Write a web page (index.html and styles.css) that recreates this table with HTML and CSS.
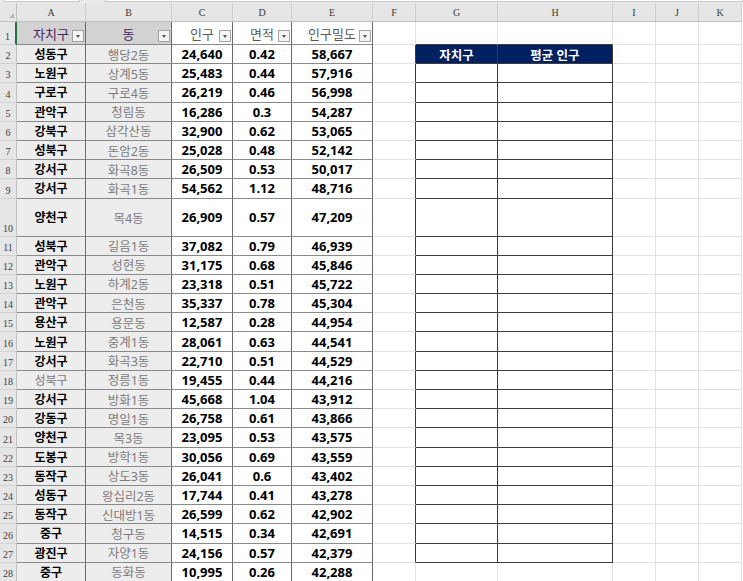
FILE: index.html
```html
<!DOCTYPE html>
<html lang="ko">
<head>
<meta charset="utf-8">
<link rel="stylesheet" href="styles.css">
</head>
<body>
<div class="sheet">
  <div class="top"><span class="box b1"></span><span class="box b2"></span></div>
  <div class="r hdr">
    <div class="corner"><span class="tri"></span></div>
    <div>A</div><div>B</div><div>C</div><div>D</div><div>E</div><div>F</div><div>G</div><div>H</div><div>I</div><div>J</div><div>K</div>
  </div>
  <div class="r h1">
    <div class="rh act">1</div>
    <div class="t ha">자치구<span class="dd"></span></div>
    <div class="t ha">동<span class="dd"></span></div>
    <div class="t hc">인구<span class="dd"></span></div>
    <div class="t hc">면적<span class="dd"></span></div>
    <div class="t hc">인구밀도<span class="dd"></span></div>
    <div></div><div class="gt"></div><div class="gt"></div><div></div><div></div><div></div>
  </div>
  <div class="r">
    <div class="rh">2</div>
    <div class="t a">성동구</div><div class="t b">행당2동</div><div class="t n">24,640</div><div class="t n">0.42</div><div class="t n">58,667</div>
    <div class="f"></div><div class="g navy">자치구</div><div class="g navy">평균 인구</div><div></div><div></div><div></div>
  </div>
  <div class="r">
    <div class="rh">3</div>
    <div class="t a">노원구</div><div class="t b">상계5동</div><div class="t n">25,483</div><div class="t n">0.44</div><div class="t n">57,916</div>
    <div class="f"></div><div class="g"></div><div class="g"></div><div></div><div></div><div></div>
  </div>
  <div class="r">
    <div class="rh">4</div>
    <div class="t a">구로구</div><div class="t b">구로4동</div><div class="t n">26,219</div><div class="t n">0.46</div><div class="t n">56,998</div>
    <div class="f"></div><div class="g"></div><div class="g"></div><div></div><div></div><div></div>
  </div>
  <div class="r">
    <div class="rh">5</div>
    <div class="t a">관악구</div><div class="t b">청림동</div><div class="t n">16,286</div><div class="t n">0.3</div><div class="t n">54,287</div>
    <div class="f"></div><div class="g"></div><div class="g"></div><div></div><div></div><div></div>
  </div>
  <div class="r">
    <div class="rh">6</div>
    <div class="t a">강북구</div><div class="t b">삼각산동</div><div class="t n">32,900</div><div class="t n">0.62</div><div class="t n">53,065</div>
    <div class="f"></div><div class="g"></div><div class="g"></div><div></div><div></div><div></div>
  </div>
  <div class="r">
    <div class="rh">7</div>
    <div class="t a">성북구</div><div class="t b">돈암2동</div><div class="t n">25,028</div><div class="t n">0.48</div><div class="t n">52,142</div>
    <div class="f"></div><div class="g"></div><div class="g"></div><div></div><div></div><div></div>
  </div>
  <div class="r">
    <div class="rh">8</div>
    <div class="t a">강서구</div><div class="t b">화곡8동</div><div class="t n">26,509</div><div class="t n">0.53</div><div class="t n">50,017</div>
    <div class="f"></div><div class="g"></div><div class="g"></div><div></div><div></div><div></div>
  </div>
  <div class="r">
    <div class="rh">9</div>
    <div class="t a">강서구</div><div class="t b">화곡1동</div><div class="t n">54,562</div><div class="t n">1.12</div><div class="t n">48,716</div>
    <div class="f"></div><div class="g"></div><div class="g"></div><div></div><div></div><div></div>
  </div>
  <div class="r tall">
    <div class="rh">10</div>
    <div class="t a">양천구</div><div class="t b">목4동</div><div class="t n">26,909</div><div class="t n">0.57</div><div class="t n">47,209</div>
    <div class="f"></div><div class="g"></div><div class="g"></div><div></div><div></div><div></div>
  </div>
  <div class="r">
    <div class="rh">11</div>
    <div class="t a">성북구</div><div class="t b">길음1동</div><div class="t n">37,082</div><div class="t n">0.79</div><div class="t n">46,939</div>
    <div class="f"></div><div class="g"></div><div class="g"></div><div></div><div></div><div></div>
  </div>
  <div class="r">
    <div class="rh">12</div>
    <div class="t a">관악구</div><div class="t b">성현동</div><div class="t n">31,175</div><div class="t n">0.68</div><div class="t n">45,846</div>
    <div class="f"></div><div class="g"></div><div class="g"></div><div></div><div></div><div></div>
  </div>
  <div class="r">
    <div class="rh">13</div>
    <div class="t a">노원구</div><div class="t b">하계2동</div><div class="t n">23,318</div><div class="t n">0.51</div><div class="t n">45,722</div>
    <div class="f"></div><div class="g"></div><div class="g"></div><div></div><div></div><div></div>
  </div>
  <div class="r">
    <div class="rh">14</div>
    <div class="t a">관악구</div><div class="t b">은천동</div><div class="t n">35,337</div><div class="t n">0.78</div><div class="t n">45,304</div>
    <div class="f"></div><div class="g"></div><div class="g"></div><div></div><div></div><div></div>
  </div>
  <div class="r">
    <div class="rh">15</div>
    <div class="t a">용산구</div><div class="t b">용문동</div><div class="t n">12,587</div><div class="t n">0.28</div><div class="t n">44,954</div>
    <div class="f"></div><div class="g"></div><div class="g"></div><div></div><div></div><div></div>
  </div>
  <div class="r">
    <div class="rh">16</div>
    <div class="t a">노원구</div><div class="t b">중계1동</div><div class="t n">28,061</div><div class="t n">0.63</div><div class="t n">44,541</div>
    <div class="f"></div><div class="g"></div><div class="g"></div><div></div><div></div><div></div>
  </div>
  <div class="r">
    <div class="rh">17</div>
    <div class="t a">강서구</div><div class="t b">화곡3동</div><div class="t n">22,710</div><div class="t n">0.51</div><div class="t n">44,529</div>
    <div class="f"></div><div class="g"></div><div class="g"></div><div></div><div></div><div></div>
  </div>
  <div class="r">
    <div class="rh">18</div>
    <div class="t a gr">성북구</div><div class="t b">정릉1동</div><div class="t n">19,455</div><div class="t n">0.44</div><div class="t n">44,216</div>
    <div class="f"></div><div class="g"></div><div class="g"></div><div></div><div></div><div></div>
  </div>
  <div class="r">
    <div class="rh">19</div>
    <div class="t a">강서구</div><div class="t b">방화1동</div><div class="t n">45,668</div><div class="t n">1.04</div><div class="t n">43,912</div>
    <div class="f"></div><div class="g"></div><div class="g"></div><div></div><div></div><div></div>
  </div>
  <div class="r">
    <div class="rh">20</div>
    <div class="t a">강동구</div><div class="t b">명일1동</div><div class="t n">26,758</div><div class="t n">0.61</div><div class="t n">43,866</div>
    <div class="f"></div><div class="g"></div><div class="g"></div><div></div><div></div><div></div>
  </div>
  <div class="r">
    <div class="rh">21</div>
    <div class="t a">양천구</div><div class="t b">목3동</div><div class="t n">23,095</div><div class="t n">0.53</div><div class="t n">43,575</div>
    <div class="f"></div><div class="g"></div><div class="g"></div><div></div><div></div><div></div>
  </div>
  <div class="r">
    <div class="rh">22</div>
    <div class="t a">도봉구</div><div class="t b">방학1동</div><div class="t n">30,056</div><div class="t n">0.69</div><div class="t n">43,559</div>
    <div class="f"></div><div class="g"></div><div class="g"></div><div></div><div></div><div></div>
  </div>
  <div class="r">
    <div class="rh">23</div>
    <div class="t a">동작구</div><div class="t b">상도3동</div><div class="t n">26,041</div><div class="t n">0.6</div><div class="t n">43,402</div>
    <div class="f"></div><div class="g"></div><div class="g"></div><div></div><div></div><div></div>
  </div>
  <div class="r">
    <div class="rh">24</div>
    <div class="t a">성동구</div><div class="t b">왕십리2동</div><div class="t n">17,744</div><div class="t n">0.41</div><div class="t n">43,278</div>
    <div class="f"></div><div class="g"></div><div class="g"></div><div></div><div></div><div></div>
  </div>
  <div class="r">
    <div class="rh">25</div>
    <div class="t a">동작구</div><div class="t b">신대방1동</div><div class="t n">26,599</div><div class="t n">0.62</div><div class="t n">42,902</div>
    <div class="f"></div><div class="g"></div><div class="g"></div><div></div><div></div><div></div>
  </div>
  <div class="r">
    <div class="rh">26</div>
    <div class="t a">중구</div><div class="t b">청구동</div><div class="t n">14,515</div><div class="t n">0.34</div><div class="t n">42,691</div>
    <div class="f"></div><div class="g"></div><div class="g"></div><div></div><div></div><div></div>
  </div>
  <div class="r">
    <div class="rh">27</div>
    <div class="t a">광진구</div><div class="t b">자양1동</div><div class="t n">24,156</div><div class="t n">0.57</div><div class="t n">42,379</div>
    <div class="f"></div><div class="g"></div><div class="g"></div><div></div><div></div><div></div>
  </div>
  <div class="r">
    <div class="rh">28</div>
    <div class="t a">중구</div><div class="t b">동화동</div><div class="t n">10,995</div><div class="t n">0.26</div><div class="t n">42,288</div>
    <div></div><div></div><div></div><div></div><div></div><div></div>
  </div>
</div>
</body>
</html>
```
FILE: styles.css
```css
:root {
  --cols: 17px 69px 86px 61px 59px 81px 43px 82px 115px 43px 43px 43px;
}
html, body {
  margin: 0;
  background: #fff;
  overflow: hidden;
}
body {
  font-family: "Noto Sans", "Noto Sans CJK KR", sans-serif;
  font-size: 12px;
  color: #000;
}
.sheet {
  width: 743px;
}
.top {
  height: 3px;
  background: #e9e9e9;
  display: flex;
  padding-left: 4px;
  gap: 25px;
}
.top .box {
  box-sizing: border-box;
  height: 2px;
  background: #fff;
  border: 1px solid #c8c8c8;
  border-top: 0;
}
.top .b1 { width: 76px; }
.top .b2 { flex: 1; }

.r {
  display: grid;
  grid-template-columns: var(--cols);
  height: 19.2px;
}
.r.h1 { height: 23px; }
.r.tall { height: 38px; }
.r > div {
  box-sizing: border-box;
  border-right: 1px solid #e1e1e1;
  border-bottom: 1px solid #e1e1e1;
  display: flex;
  align-items: center;
  justify-content: center;
  overflow: hidden;
  white-space: nowrap;
  position: relative;
}

/* column header row */
.r.hdr { height: 19px; }
.r.hdr > div {
  background: #e6e6e6;
  border-right: 1px solid #cdcdcd;
  border-bottom: 1px solid #bfbfbf;
  font-family: "Liberation Serif", "DejaVu Serif", serif;
  font-size: 10px;
  color: #3a3a3a;
  padding-top: 1px;
}
.r.hdr > .corner {
  border-right: 1px solid #bfbfbf;
}
.tri {
  position: absolute;
  right: 2px;
  bottom: 3px;
  width: 0;
  height: 0;
  border-left: 5px solid transparent;
  border-bottom: 5px solid #b4b4b4;
}

/* row headers */
.r > .rh {
  background: #e6e6e6;
  border-right: 1px solid #bfbfbf;
  border-bottom: 1px solid #d2d2d2;
  align-items: flex-end;
  padding-bottom: 2px;
  font-family: "Liberation Serif", "DejaVu Serif", serif;
  font-size: 10px;
  color: #3a3a3a;
}
.r > .rh.act {
  border-right: 2px solid #217346;
}

/* data table A:E */
.r > .t {
  border-right: 1px solid #6a6a6a;
  border-bottom: 1px solid #8a8a8a;
}
.r > .ha {
  background: #d2d2d2;
  color: #48225f;
  font-size: 13px;
}
.r > .hc {
  background: #fff;
  color: #595959;
  font-size: 13px;
}
.dd {
  position: absolute;
  right: 1px;
  bottom: 2px;
  box-sizing: border-box;
  width: 12px;
  height: 12px;
  border: 1px solid #a3a3a3;
  background: #f4f4f4;
}
.dd::after {
  content: "";
  position: absolute;
  left: 3px;
  top: 4px;
  border-left: 2.5px solid transparent;
  border-right: 2.5px solid transparent;
  border-top: 3px solid #555;
}
.r > .a {
  background: #ededed;
  font-weight: 700;
  font-size: 12px;
}
.r > .a.gr {
  font-weight: 400;
  color: #7a7a7a;
}
.r > .b {
  background: #ededed;
  color: #7c7c7c;
  font-size: 12.5px;
}
.r > .n {
  font-weight: 700;
  font-size: 13px;
}

/* summary table G:H */
.r > .f {
  border-right: 1px solid #3c3c3c;
}
.r > .gt {
  border-bottom: 1px solid #3c3c3c;
}
.r > .g {
  border-right: 1px solid #3c3c3c;
  border-bottom: 1px solid #3c3c3c;
}
.r > .navy {
  background: #002060;
  color: #fff;
  font-weight: 700;
  font-size: 12.5px;
}
```
